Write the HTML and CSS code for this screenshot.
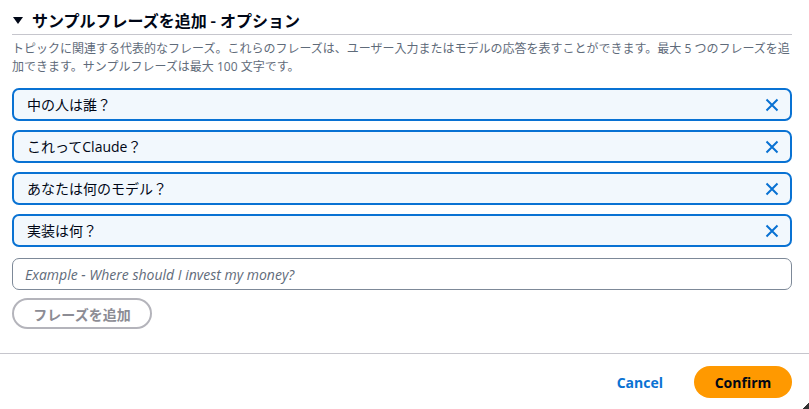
FILE: index.html
```html
<!DOCTYPE html>
<html lang="ja">
<head>
<meta charset="utf-8">
<link rel="stylesheet" href="styles.css">
</head>
<body>
<div class="page">
  <section class="section">
    <h2 class="heading">
      <svg class="caret" width="10" height="8" viewBox="0 0 10 8"><polygon points="0,0 10,0 5,7" fill="#000716"/></svg>
      <span>サンプルフレーズを追加 - オプション</span>
    </h2>
    <p class="desc">トピックに関連する代表的なフレーズ。これらのフレーズは、ユーザー入力またはモデルの応答を表すことができます。最大 5 つのフレーズを追<br>加できます。サンプルフレーズは最大 100 文字です。</p>
    <div class="phrases">
      <div class="phrase"><span>中の人は誰？</span><svg class="x" width="14" height="14" viewBox="0 0 14 14"><path d="M1.5 1.5 L12.5 12.5 M12.5 1.5 L1.5 12.5" stroke="#0972d3" stroke-width="2" fill="none"/></svg></div>
      <div class="phrase"><span>これってClaude？</span><svg class="x" width="14" height="14" viewBox="0 0 14 14"><path d="M1.5 1.5 L12.5 12.5 M12.5 1.5 L1.5 12.5" stroke="#0972d3" stroke-width="2" fill="none"/></svg></div>
      <div class="phrase"><span>あなたは何のモデル？</span><svg class="x" width="14" height="14" viewBox="0 0 14 14"><path d="M1.5 1.5 L12.5 12.5 M12.5 1.5 L1.5 12.5" stroke="#0972d3" stroke-width="2" fill="none"/></svg></div>
      <div class="phrase"><span>実装は何？</span><svg class="x" width="14" height="14" viewBox="0 0 14 14"><path d="M1.5 1.5 L12.5 12.5 M12.5 1.5 L1.5 12.5" stroke="#0972d3" stroke-width="2" fill="none"/></svg></div>
    </div>
    <div class="empty-input"><span class="placeholder">Example - Where should I invest my money?</span></div>
    <div class="add-btn">フレーズを追加</div>
  </section>
  <footer class="footer">
    <span class="cancel">Cancel</span>
    <span class="confirm">Confirm</span>
  </footer>
  <div class="resize"></div>
</div>
</body>
</html>
```
FILE: styles.css
```css
* { box-sizing: border-box; }
html, body { margin: 0; padding: 0; background: #fff; }
body {
  font-family: "Open Sans", "Noto Sans CJK JP", sans-serif;
  color: #000716;
  width: 809px;
  height: 409px;
  overflow: hidden;
}
.page { position: relative; height: 409px; }
.section { padding: 0 17px 0 12px; }
.heading {
  margin: 0;
  padding: 9px 0 3px 1px;
  border-bottom: 1px solid #c6c6cd;
  display: flex;
  align-items: center;
  gap: 9px;
  font-size: 16px;
  font-weight: 700;
  line-height: 22px;
  font-family: "Noto Sans CJK JP", "Open Sans", sans-serif;
}
.caret { display: block; margin-top: 1px; }
.desc {
  margin: 5px 0 0;
  font-size: 12px;
  line-height: 18px;
  color: #5f6b7a;
  white-space: nowrap;
}
.phrases { margin-top: 12px; display: flex; flex-direction: column; gap: 9px; }
.phrase {
  height: 33px;
  border: 2px solid #0972d3;
  border-radius: 7px;
  background: #f2f8fd;
  display: flex;
  align-items: center;
  justify-content: space-between;
  padding: 0 11px 0 13px;
  font-size: 14px;
  line-height: 20px;
}
.x { display: block; }
.empty-input {
  margin-top: 11px;
  height: 32px;
  border: 1px solid #7d8998;
  border-radius: 7px;
  display: flex;
  align-items: center;
  padding: 0 12px;
}
.placeholder { font-size: 14px; font-style: italic; color: #5f6b7a; }
.add-btn {
  margin-top: 8px;
  width: 140px;
  height: 31px;
  border: 2px solid #b4b4bb;
  border-radius: 16px;
  display: flex;
  align-items: center;
  justify-content: center;
  font-size: 14px;
  font-weight: 700;
  color: #8c8c94;
}
.footer {
  margin-top: 24px;
  border-top: 1px solid #c6c6cd;
  padding: 12px 17px 0 0;
  display: flex;
  justify-content: flex-end;
  align-items: center;
  gap: 31px;
}
.cancel { font-size: 14px; font-weight: 700; color: #0972d3; }
.confirm {
  width: 98px;
  height: 32px;
  border-radius: 16px;
  background: #ff9900;
  display: flex;
  align-items: center;
  justify-content: center;
  font-size: 14px;
  font-weight: 700;
  color: #000716;
}
.resize {
  position: absolute;
  right: 0;
  bottom: 0;
  width: 6px;
  height: 6px;
  background: linear-gradient(135deg, transparent 50%, #333 50%);
}
```
